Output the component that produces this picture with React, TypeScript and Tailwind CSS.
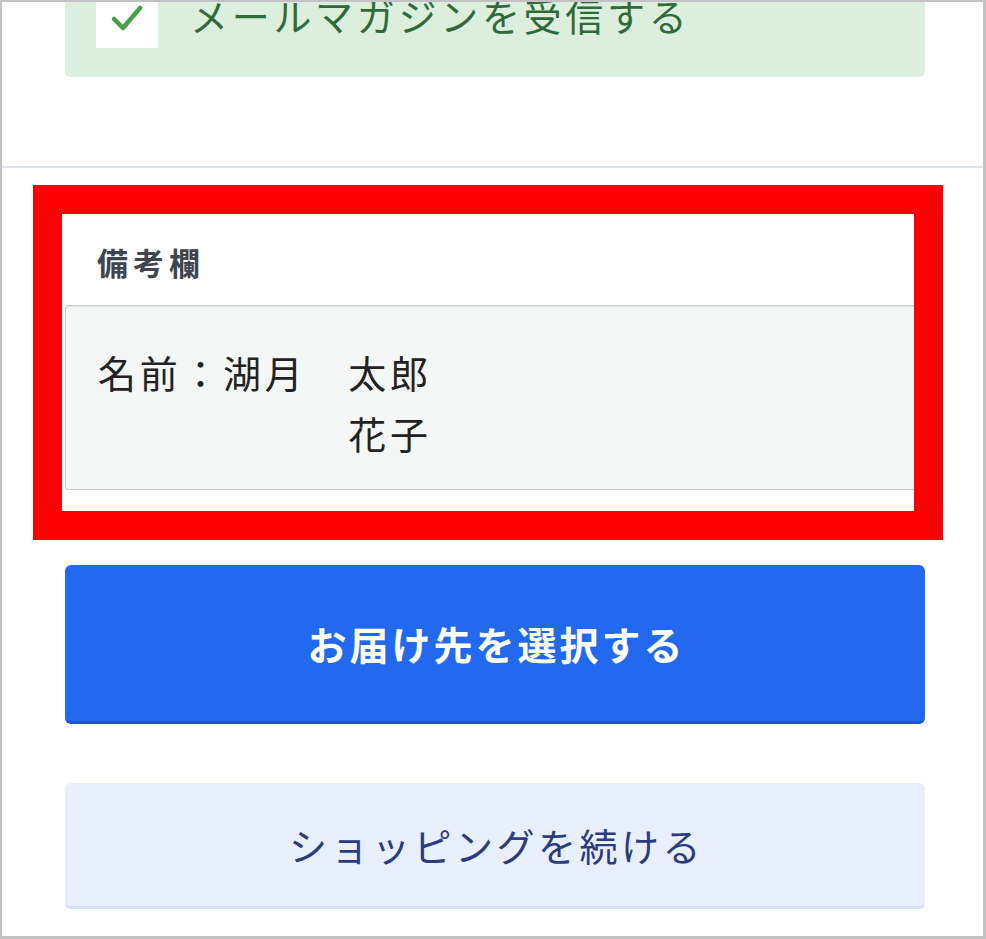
import React from 'react';

const jp = "font-['Noto_Sans_CJK_JP','Noto_Sans',sans-serif]";

const CheckIcon = () => (
  <svg width="34" height="28" viewBox="0 0 34 28" fill="none">
    <path d="M4 15 L13 24 L30 4" stroke="#46a046" strokeWidth="4.5" strokeLinecap="round" strokeLinejoin="round" />
  </svg>
);

export default function App() {
  return (
    <div className={`relative w-[986px] h-[939px] overflow-hidden bg-white border-t-2 border-l-2 border-r-[3px] border-b-[3px] border-[#c2c2c2] ${jp}`}>
      {/* mail magazine opt-in */}
      <div className="pl-[63px] pr-[58px]">
        <div className="flex items-start h-[75px] bg-[#dcefdc] rounded-b-md">
          <div className="ml-[31px] w-[62px] h-[46px] bg-white flex items-start justify-center pt-[2px]">
            <CheckIcon />
          </div>
          <span className="ml-[32px] -mt-[6px] text-[38px] leading-[37px] tracking-[3.7px] text-[#2f6b3a]">
            メールマガジンを受信する
          </span>
        </div>
      </div>

      <div className="mt-[89px] h-[2px] bg-[#dfe5ea]" />

      {/* remarks */}
      <div className="pl-[63px] pr-[58px] pt-[76px]">
        <div className="pl-[32px] text-[31px] leading-[36px] tracking-[5px] font-bold text-[#3d4550]">備考欄</div>
        <div className="mt-[25px] h-[185px] rounded-[3px] border border-[#c6ced6] bg-[#f5f7f7] shadow-[inset_0_1px_1px_rgba(0,0,0,0.08)] pl-[32px] pt-[35px] text-[38px] leading-[61px] tracking-[3.7px] text-[#222] whitespace-pre">
          {'名前：湖月　太郎\n　　　　　　花子'}
        </div>

        <button className="mt-[75px] w-full h-[159px] rounded-md bg-[#2269f0] border-b-[3px] border-[#1c57cc] text-white text-[39px] font-bold tracking-[3px] pl-[3px]">
          お届け先を選択する
        </button>

        <button className="mt-[59px] w-full h-[126px] rounded-md bg-[#e8f0fd] border-b-[3px] border-[#d2e0f8] text-[#2c3a7e] text-[38px] tracking-[3.5px] pl-[3px]">
          ショッピングを続ける
        </button>
      </div>

      {/* annotation frame */}
      <div className="absolute left-[31px] top-[183px] w-[910px] h-[355px] border-[29px] border-[#ff0000] pointer-events-none" />
    </div>
  );
}
